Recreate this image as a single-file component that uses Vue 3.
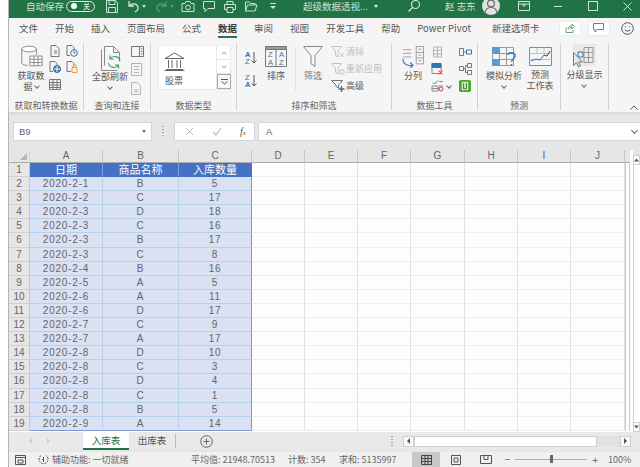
<script setup>
const menus = ['文件', '开始', '插入', '页面布局', '公式', '数据', '审阅', '视图', '开发工具', '帮助', 'Power Pivot', '新建选项卡'];

const colHeads = [
    { name: 'A', w: 73 }, { name: 'B', w: 76 }, { name: 'C', w: 73 }, { name: 'D', w: 53 },
    { name: 'E', w: 53 }, { name: 'F', w: 53 }, { name: 'G', w: 54 }, { name: 'H', w: 53 },
    { name: 'I', w: 53 }, { name: 'J', w: 54 },
];
const blanks = 7;

const rows = [
    ['2020-2-1', 'B', 5], ['2020-2-2', 'C', 17], ['2020-2-3', 'D', 18], ['2020-2-3', 'C', 16],
    ['2020-2-3', 'B', 17], ['2020-2-3', 'C', 8], ['2020-2-4', 'B', 16], ['2020-2-5', 'A', 5],
    ['2020-2-6', 'A', 11], ['2020-2-6', 'D', 17], ['2020-2-7', 'C', 9], ['2020-2-7', 'A', 17],
    ['2020-2-8', 'D', 10], ['2020-2-8', 'C', 3], ['2020-2-8', 'D', 4], ['2020-2-8', 'C', 1],
    ['2020-2-8', 'B', 5], ['2020-2-9', 'A', 14],
];

const gridCols = '21px ' + colHeads.map((c) => c.w + 'px').join(' ') + ' 5px';
</script>

<template>
    <div class="page">
        <div class="window">
            <!-- title bar -->
            <header class="titlebar">
                <span class="autosave">自动保存</span>
                <span class="toggle"><i></i><b>关</b></span>
                <svg class="qa-save" width="12" height="13" viewBox="0 0 12 13" fill="none" stroke="#cfe3d7"><path d="M.5.5h9l2 2v10H.5zM3 .5v4h6v-4M2.500 12.500v-5h7v5"/></svg>
                <svg class="qa-undo" width="13" height="13" viewBox="0 0 13 13" fill="none" stroke="#cfe3d7" stroke-width="1.3"><path d="M2 1v5h5M2 6c2-3 8-3 9 1 .5 2-1 4-3 5"/></svg>
                <span class="caret"></span>
                <svg class="qa-redo" width="13" height="13" viewBox="0 0 13 13" fill="none" stroke="#cfe3d7" stroke-width="1.3"><path d="M11 1v5H6M11 6C9 3 3 3 2 7c-.5 2 1 4 3 5"/></svg>
                <span class="caret dim"></span>
                <svg class="qa-camera" width="14" height="13" viewBox="0 0 14 13" fill="none" stroke="#cfe3d7"><path d="M1 3.500h3l1-2h4l1 2h3v8H1z"/><circle cx="7" cy="7.500" r="2.400"/></svg>
                <svg class="qa" width="14" height="13" viewBox="0 0 14 13" fill="none" stroke="#cfe3d7"><path d="M1.500 1.500h11v7H6l-3 3v-3H1.500z"/></svg>
                <svg class="qa" width="14" height="13" viewBox="0 0 14 13" fill="none" stroke="#cfe3d7"><path d="M4 4V1.500h6V4M1.500 4.500h11v5H10M4 9.500H1.500v-5M4 7.500h6v5H4z"/></svg>
                <svg class="qa" width="14" height="13" viewBox="0 0 14 13" fill="none" stroke="#cfe3d7"><path d="M1.500 11V2h4l1 1.500H11V5M1.500 11l2-6h9.500l-2 6z"/></svg>
                <span class="more"></span>
                <span class="doc-name">超级数据透视...</span>
                <span class="caret white"></span>
                <svg class="search" width="14" height="14" viewBox="0 0 14 14" fill="none" stroke="#cfe3d7" stroke-width="1.2"><circle cx="8.500" cy="5.500" r="4"/><path d="M5.500 8.500L1.500 12.500"/></svg>
                <span class="user">赵 志东</span>
                <span class="avatar">
                    <svg width="18" height="18" viewBox="0 0 18 18" fill="none" stroke="#6a6a6a" stroke-width="1.2"><circle cx="9" cy="6.500" r="3.400"/><path d="M3 16c.5-4 3-5.500 6-5.500s5.500 1.500 6 5.500"/></svg>
                </span>
                <svg class="display" width="12" height="10" viewBox="0 0 12 10" fill="none" stroke="#cfe3d7"><path d="M.5.500h11v9H.5zM.5 3h11M6 3v3M4.500 4.500L6 3l1.500 1.500"/></svg>
                <span class="win-min"></span>
                <span class="win-max"></span>
                <svg class="win-close" width="9" height="9" viewBox="0 0 9 9" stroke="#cfe3d7"><path d="M.5.500l8 8M8.500.500l-8 8"/></svg>
            </header>

            <!-- menu tabs -->
            <nav class="menubar">
                <span v-for="m in menus" :key="m" class="menu" :class="{ active: m === '数据', latin: m === 'Power Pivot' }">{{ m }}</span>
                <span class="menu-btn share">
                    <svg width="10" height="10" viewBox="0 0 10 10" fill="none" stroke="#6f9c84"><path d="M1 4.500v5h7V7M3 6c0-2.500 2-3 4-3V1l2.500 2.500L7 6V4.500C5 4.500 4 5 3 6z"/></svg>
                </span>
                <span class="menu-btn comment">
                    <svg width="11" height="10" viewBox="0 0 11 10" fill="none" stroke="#4e9470"><path d="M.5.500h10v6H4L2 9V6.500H.5z"/></svg>
                </span>
                <svg class="smile" width="13" height="13" viewBox="0 0 13 13" fill="none" stroke="#555"><circle cx="6.500" cy="6.500" r="5.800"/><path d="M3.800 7.800c1.200 1.700 4.200 1.700 5.400 0"/><path d="M4.600 4.300v1M8.400 4.300v1"/></svg>
            </nav>

            <!-- ribbon -->
            <section class="ribbon">
                <div class="group w-get">
                    <div class="gbody g1">
                        <div class="big">
                            <svg width="23" height="22" viewBox="0 0 28 27" fill="none" stroke="#777"><ellipse cx="11" cy="5" rx="9" ry="3.500" fill="#fff"/><path d="M2 5v17c0 2 3 3 7 3M20 5v7"/><path d="M12 13.500h15v12H12zM12 17.500h15M12 21.500h15M17 13.500v12M22 13.500v12" fill="#fff"/></svg>
                            <span class="lbl">获取数<br>据 <i class="chev"></i></span>
                        </div>
                        <div class="smalls">
                            <div class="sm-row">
                                <svg width="12" height="12" viewBox="0 0 12 12" fill="none" stroke="#777"><path d="M2 .500h5l3 3v8H2z"/><path d="M5 6h3M5 8h3"/></svg>
                                <svg width="12" height="12" viewBox="0 0 12 12" fill="none" stroke="#777"><path d="M1 .500h5l2 2v2M1 .500v10h3"/><circle cx="8" cy="8" r="3.300" stroke="#2e75b6"/><path d="M8 6v2h1.500" stroke="#2e75b6"/></svg>
                            </div>
                            <div class="sm-row">
                                <svg width="12" height="12" viewBox="0 0 12 12" fill="none" stroke="#777"><path d="M1 .500h5l2 2v2M1 .500v10h3"/><circle cx="8" cy="8" r="3.500" fill="#2e75b6" stroke="#2e75b6"/><path d="M5 8h6M8 5v6" stroke="#fff"/></svg>
                                <svg width="12" height="12" viewBox="0 0 12 12" fill="none" stroke="#777"><path d="M1 .500h5l2 2v2M1 .500v10h4"/><path d="M6 6.500h5v5H6z" stroke="#ed9a3c"/><path d="M7 6.500V5a1.500 1.500 0 013 0v1.500" stroke="#ed9a3c"/></svg>
                            </div>
                            <svg class="sm-last" width="12" height="11" viewBox="0 0 12 11" fill="none" stroke="#777"><path d="M.5.500h11v10H.5zM.5 3.500h11M.5 6h11M.5 8.500h11M4 .5v10M8 .5v10"/></svg>
                        </div>
                    </div>
                    <div class="glabel">获取和转换数据</div>
                </div>

                <div class="group w-query">
                    <div class="gbody g2">
                        <div class="big">
                            <svg width="24" height="25" viewBox="0 0 24 25" fill="none" stroke="#888"><path d="M3.500 3.500v21h16"/><path d="M6.500.5h9l6 6v9M15.500.5v6h6M6.500.5v19" fill="#fff"/><path d="M22 15a5.500 5.500 0 00-10-2M10.500 17a5.500 5.500 0 0010 2M12 9.500v3.500h3.500M20.500 22.500V19H17" stroke="#3fa06a" stroke-width="1.200"/></svg>
                            <span class="lbl flat">全部刷新<br><i class="chev"></i></span>
                        </div>
                        <div class="stack">
                            <svg width="13" height="11" viewBox="0 0 13 11" fill="none" stroke="#777"><path d="M.5.500h12v10H.5zM8.500.5v10"/><path d="M10 3h1.500M10 5.500h1.500M10 8h1.500" stroke="#2e75b6"/></svg>
                            <svg width="11" height="13" viewBox="0 0 11 13" fill="none" stroke="#b5b5b5"><path d="M.5.500h10v12H.5zM3 3.500h5M3 6.500h5M3 9.500h5"/></svg>
                            <svg width="11" height="13" viewBox="0 0 11 13" fill="none" stroke="#b5b5b5"><path d="M.5.500h6l3 3v9h-9zM3 8h4.500M3 10h4.500"/></svg>
                        </div>
                    </div>
                    <div class="glabel">查询和连接</div>
                </div>

                <div class="group w-type">
                    <div class="gbody g3">
                        <div class="gallery">
                            <div class="gallery-item">
                                <svg width="21" height="19" viewBox="0 0 21 19" fill="none" stroke="#666"><path d="M1 6.500L10.500 1 20 6.500zM2 6.500h17M2 17.500h17M.5 18.500h20M4.500 8v8M8 8v8M13 8v8M16.500 8v8"/></svg>
                                <span class="lbl">股票</span>
                            </div>
                            <div class="gallery-scroll">
                                <span><svg width="6" height="4" viewBox="0 0 6 4" fill="none" stroke="#999"><path d="M.5 3.500L3 1l2.500 2.500"/></svg></span>
                                <span><svg width="6" height="4" viewBox="0 0 6 4" fill="none" stroke="#999"><path d="M.5.500L3 3 5.500.5"/></svg></span>
                                <span class="open"><svg width="7" height="6" viewBox="0 0 7 6" fill="none" stroke="#555"><path d="M0 .5h7M.5 2.500L3.500 5l3-2.500"/></svg></span>
                            </div>
                        </div>
                    </div>
                    <div class="glabel">数据类型</div>
                </div>

                <div class="group w-sort">
                    <div class="gbody g4">
                        <div class="sort-pair">
                            <span class="az"><span class="letters"><b>A</b><br><em>Z</em></span><svg width="6" height="12" viewBox="0 0 6 12" fill="none" stroke="#555"><path d="M3 0v11M.5 8.500L3 11l2.500-2.500"/></svg></span>
                            <span class="az"><span class="letters"><em>Z</em><br><b>A</b></span><svg width="6" height="12" viewBox="0 0 6 12" fill="none" stroke="#555"><path d="M3 0v11M.5 8.500L3 11l2.500-2.500"/></svg></span>
                        </div>
                        <div class="big sort-big">
                            <svg width="22" height="21" viewBox="0 0 22 21" fill="none" stroke="#777"><path d="M.5.500h21v20H.5zM.5 3.500h21M11 3.500v17" /><path d="M.5.500h21v3H.5z" fill="#999"/><text x="3" y="11" class="svgt">Z</text><text x="14" y="11" class="svgt blue">A</text><text x="3" y="19" class="svgt blue">A</text><text x="14" y="19" class="svgt">Z</text></svg>
                            <span class="lbl">排序</span>
                        </div>
                        <span class="vsep"></span>
                        <div class="big filter-big">
                            <svg width="20" height="21" viewBox="0 0 20 21" fill="none" stroke="#888"><path d="M.5.500h19L12 9.500v11l-4-3v-8z"/></svg>
                            <span class="lbl dim">筛选</span>
                        </div>
                        <div class="filter-opts">
                            <span class="opt off"><svg width="14" height="12" viewBox="0 0 14 12" fill="none" stroke="#c4c4c4"><path d="M.5.500h10L7 5v6L4.500 9.500V5zM9 7l4 4M13 7l-4 4"/></svg>清除</span>
                            <span class="opt off"><svg width="14" height="12" viewBox="0 0 14 12" fill="none" stroke="#c4c4c4"><path d="M.5.500h10L7 5v6L4.500 9.500V5zM9 7h4v4H9z"/></svg>重新应用</span>
                            <span class="opt"><svg width="14" height="12" viewBox="0 0 14 12" fill="none" stroke="#777"><path d="M.5.500h11L7.500 5v3L5 6.500V5z"/><path d="M7.500 9h6M10.500 6v6" stroke="#2e75b6" stroke-width="1.500"/></svg>高级</span>
                        </div>
                    </div>
                    <div class="glabel">排序和筛选</div>
                </div>

                <div class="group w-tools">
                    <div class="gbody g5">
                        <div class="big">
                            <svg width="26" height="22" viewBox="0 0 26 24" fill="none" stroke="#999"><path d="M2 4h9M2 8h9M2 12h9" /><path d="M16.500 .5h8v19h-8zM16.500 7h8M16.500 13h8M19 3.500h3M19 10h3M19 16h3"/><path d="M2 14c0 6 5 8 11 7M10 18l3 3-3 3" stroke="#2e75b6" stroke-width="1.200"/></svg>
                            <span class="lbl">分列</span>
                        </div>
                        <div class="stack st5">
                            <svg width="13" height="12" viewBox="0 0 13 12" fill="none" stroke="#b5b5b5"><path d="M2.500 1h8v10h-8zM2.500 4.500h8M2.500 8h8M6.500 1v10"/></svg>
                            <svg width="13" height="12" viewBox="0 0 13 12" fill="none" stroke="#888"><path d="M1 .5h9v10H1z"/><path d="M1 .5h9v4H1z" fill="#2e75b6" stroke="#2e75b6"/><path d="M7.500 7.500l4 4M11.500 7.500l-4 4" stroke="#d13438"/></svg>
                            <span class="row-chev"><svg width="13" height="12" viewBox="0 0 13 12" fill="none" stroke="#888"><path d="M1 6h6v5H1zM1 8.500h6"/><path d="M2 2.500l1.500 1.500L7 .5" stroke="#3fa06a"/><path d="M8 6h4M8 1.500h4"/><circle cx="10" cy="9" r="2" stroke="#d13438"/></svg><i class="chev"></i></span>
                        </div>
                        <div class="stack st5b">
                            <svg width="13" height="12" viewBox="0 0 13 12" fill="none" stroke="#777"><path d="M.5 2.500h4v7h-4zM4.500 6h3"/><path d="M7.500 4h5v4h-5z" stroke="#2e75b6"/></svg>
                            <svg width="13" height="12" viewBox="0 0 13 12" fill="none" stroke="#777"><path d="M.5 3.500h4v4h-4zM8.500.5h4v4h-4zM8.500 7.500h4v4h-4zM4.500 5.500h2V2.500h2M6.500 5.500v4h2"/></svg>
                            <svg width="12" height="12" viewBox="0 0 13 13"><rect width="13" height="13" rx="2" fill="#4ea72e"/><rect x="3" y="2" width="7" height="9" fill="#d7ecd1"/><path d="M5 3.500v6h3v-6" fill="none" stroke="#2d6e2a"/></svg>
                        </div>
                    </div>
                    <div class="glabel">数据工具</div>
                </div>

                <div class="group w-fore">
                    <div class="gbody g6">
                        <div class="big whatif">
                            <svg width="25" height="20" viewBox="0 0 25 20" fill="none" stroke="#9a9a9a"><path d="M.5.500h21v18H.5zM.5 6.500h21M.5 12.500h21M7.500.5v18M14.500.5v18"/><path d="M.5.500h7v6h-7zM.5 12.500h7v6h-7z" fill="#5b9bd5" stroke="#5b9bd5"/><path d="M16 8c0-3 6-3 7 0s-3 3.500-3.500 7M19.500 17v2" stroke="#2e75b6" stroke-width="1.400"/></svg>
                            <span class="lbl">模拟分析<br><i class="chev"></i></span>
                        </div>
                        <div class="big forecast">
                            <svg width="23" height="19" viewBox="0 0 23 19" fill="none" stroke="#888"><path d="M.5.500h22v18H.5z"/><path d="M.5 6.500h22M.5 12.500h22M8 .5v6M15 .5v6" stroke="#c0c0c0"/><path d="M2 14l5-2 4 1 4-5 3 1 3-5" stroke="#2e75b6"/><path d="M15 8l3 1 3-5" stroke="#d13438"/></svg>
                            <span class="lbl">预测<br>工作表</span>
                        </div>
                    </div>
                    <div class="glabel">预测</div>
                </div>

                <div class="group w-outline">
                    <div class="gbody g7">
                        <div class="big">
                            <span class="hot">
                                <svg width="20" height="17" viewBox="0 0 20 17" fill="none" stroke="#999"><path d="M10 .5h9v15h-9zM14.500 .5v15M10 5.500h9M10 10.500h9"/><path d="M4 5h5v5H4z" stroke="#2e75b6"/></svg>
                            </span>
                            <span class="lbl">分级显示<br><i class="chev"></i></span>
                        </div>
                    </div>
                </div>
                <div class="collapse"><svg width="8" height="5" viewBox="0 0 8 5" fill="none" stroke="#555"><path d="M.5 4.500L4 1l3.500 3.500"/></svg></div>
                <svg class="cursor" width="10" height="16" viewBox="0 0 10 16"><path d="M.5.500v13l3-3 2 4.500 2-1-2-4h4z" fill="#e9e9e9" stroke="#777"/></svg>
            </section>

            <!-- formula bar -->
            <div class="formula">
                <div class="namebox"><span>B9</span><i class="down"></i></div>
                <span class="grip"></span>
                <div class="fxbox">
                    <svg width="9" height="9" viewBox="0 0 9 9" stroke="#bbb"><path d="M1 1l7 7M8 1L1 8"/></svg>
                    <svg width="10" height="9" viewBox="0 0 10 9" fill="none" stroke="#bbb" stroke-width="1.200"><path d="M1 5l3 3 5-7"/></svg>
                    <span class="fx">f<small>x</small></span>
                </div>
                <div class="input"><span>A</span><i class="chev end"></i></div>
            </div>

            <!-- sheet -->
            <div class="sheet-wrap">
                <div class="sheet" :style="{ gridTemplateColumns: gridCols }">
                    <div class="corner"><i></i></div>
                    <div v-for="c in colHeads" :key="c.name" class="chead">{{ c.name }}</div>
                    <div class="chead tail"></div>

                    <div class="rhead">1</div>
                    <div class="cell title">日期</div>
                    <div class="cell title">商品名称</div>
                    <div class="cell title last">入库数量</div>
                    <div v-for="n in blanks" :key="'t' + n" class="blank"></div>
                    <div class="tailcell"></div>

                    <template v-for="(r, i) in rows" :key="i">
                        <div class="rhead">{{ i + 2 }}</div>
                        <div class="cell" :class="{ bottom: i === rows.length - 1 }">{{ r[0] }}</div>
                        <div class="cell" :class="{ bottom: i === rows.length - 1 }">{{ r[1] }}</div>
                        <div class="cell last" :class="{ bottom: i === rows.length - 1 }">{{ r[2] }}</div>
                        <div v-for="n in blanks" :key="n" class="blank"></div>
                        <div class="tailcell"></div>
                    </template>
                </div>
                <div class="vscroll">
                    <span class="sbtn"><svg width="7" height="4" viewBox="0 0 7 4"><path d="M0 4l3.500-4L7 4z" fill="#555"/></svg></span>
                    <span class="vtrack"></span>
                    <span class="sbtn"><svg width="7" height="4" viewBox="0 0 7 4"><path d="M0 0l3.500 4L7 0z" fill="#555"/></svg></span>
                </div>
            </div>

            <!-- sheet tabs -->
            <div class="tabsbar">
                <span class="nav-arrows"><i></i><i class="r"></i></span>
                <span class="stab active">入库表</span>
                <span class="stab">出库表</span>
                <span class="stab-sep"></span>
                <svg class="add" width="13" height="13" viewBox="0 0 13 13" fill="none" stroke="#666"><circle cx="6.500" cy="6.500" r="5.800"/><path d="M3.500 6.500h6M6.500 3.500v6"/></svg>
                <span class="grip tabs-grip"></span>
                <div class="hscroll">
                    <span class="hbtn"><i class="tri-l"></i></span>
                    <span class="thumb"></span>
                    <span class="hrest"></span>
                    <span class="hbtn"><i class="tri-r"></i></span>
                </div>
            </div>

            <!-- status bar -->
            <footer class="status">
                <svg class="st-macro" width="11" height="10" viewBox="0 0 11 10" fill="none" stroke="#555"><path d="M.5.500h10v9H.5zM.5 2.500h10M3 5h5v3H3z"/></svg>
                <svg class="st-acc" width="11" height="11" viewBox="0 0 11 11" fill="none" stroke="#555"><path d="M3 1.500a4.500 4.500 0 105 0M4 5.500h3M5.500 3v5" stroke-dasharray="2 1"/></svg>
                <span class="st-text ready">辅助功能: 一切就绪</span>
                <span class="st-text avg">平均值: 21948.70513</span>
                <span class="st-text cnt">计数: 354</span>
                <span class="st-text sum">求和: 5135997</span>
                <span class="view active"><svg width="11" height="10" viewBox="0 0 11 10" fill="none" stroke="#444"><path d="M.5.500h10v9H.5zM.5 3.500h10M.5 6.500h10M4 .5v9M7 .5v9"/></svg></span>
                <span class="view"><svg width="10" height="10" viewBox="0 0 10 10" fill="none" stroke="#555"><path d="M.5.500h9v9h-9zM3 3h4v4H3z"/></svg></span>
                <span class="view"><svg width="12" height="9" viewBox="0 0 12 9" fill="none" stroke="#555"><path d="M.5 8.500V.5h11v8zM4 .5v4h4v-4"/></svg></span>
                <span class="zoom-minus"></span>
                <span class="slider"><i></i></span>
                <span class="zoom-plus">+</span>
                <span class="st-text pct">100%</span>
            </footer>
        </div>
    </div>
</template>

<style>
html, body { margin: 0; padding: 0; background: #fff; }
</style>

<style scoped>
.page { width: 640px; height: 467px; overflow: hidden; background: #fff; font-family: "Noto Sans CJK SC", "Noto Sans", sans-serif; color: #555; }
.window { margin-left: 8px; width: 632px; height: 467px; border-left: 1px solid #b5b5b5; box-sizing: border-box; background: #e6e6e6; display: flex; flex-direction: column; }

/* the top of the window is cropped, so the bar content sits high */
.titlebar { height: 18px; flex: none; box-sizing: border-box; background: #217346; display: flex; align-items: center; color: #cfe3d7; font-size: 9.5px; padding: 0 0 6px 17px; overflow: hidden; }
.autosave { width: 37px; white-space: nowrap; }
.toggle { margin-left: 3px; width: 29px; height: 11px; flex: none; border: 1px solid #e3efe8; border-radius: 7px; display: flex; align-items: center; justify-content: space-between; padding: 0 4px; box-sizing: border-box; }
.toggle i { width: 6px; height: 6px; border-radius: 50%; background: #fff; }
.toggle b { font-weight: 400; font-size: 7px; line-height: 9px; color: #fff; }
.qa-save { margin-left: 11px; flex: none; }
.qa-undo { margin-left: 9px; flex: none; }
.qa-redo { margin-left: 9px; flex: none; opacity: .35; }
.qa-camera { margin-left: 7px; flex: none; }
.qa { margin-left: 7px; flex: none; }
.caret { margin-left: 2px; width: 0; height: 0; border-left: 2.5px solid transparent; border-right: 2.5px solid transparent; border-top: 3px solid #cfe3d7; }
.caret.dim { opacity: .35; }
.caret.white { margin-left: 5px; border-top-color: #e9f2ed; }
.more { margin-left: 12px; width: 6px; height: 5px; border-top: 1px solid #cfe3d7; }
.more::after { content: ""; display: block; width: 0; margin-top: 2px; border-left: 3px solid transparent; border-right: 3px solid transparent; border-top: 3px solid #cfe3d7; }
.doc-name { margin-left: 27px; width: 66px; white-space: nowrap; }
.search { margin-left: 29px; flex: none; }
.user { margin-left: 24px; width: 34px; white-space: nowrap; }
.avatar { margin-left: 3px; width: 18px; height: 18px; flex: none; border-radius: 50%; background: #e2e2e2; display: flex; overflow: hidden; }
.display { margin-left: 18px; flex: none; }
.win-min { margin-left: 24px; width: 8px; height: 1px; background: #cfe3d7; }
.win-max { margin-left: 26px; width: 8px; height: 8px; border: 1px solid #cfe3d7; }
.win-close { margin-left: 25px; flex: none; }

.menubar { height: 20px; flex: none; background: #f5f5f5; display: flex; align-items: center; padding-left: 10px; gap: 17px; font-size: 9.5px; color: #555; }
.menu { position: relative; white-space: nowrap; line-height: 20px; }
.menu.latin { margin-right: 4px; letter-spacing: .1px; }
.menu.active { font-weight: 700; color: #3c3c3c; }
.menu.active::after { content: ""; position: absolute; left: 0; right: 0; bottom: 0; height: 2px; background: #217346; }
.menu-btn { width: 22px; height: 15px; flex: none; background: #fff; border: 1px solid #ececec; box-sizing: border-box; display: flex; align-items: center; justify-content: center; }
.share { margin-left: 2px; margin-right: -17px; }
.comment { margin-left: 7px; margin-right: -17px; }
.smile { margin-left: 11px; flex: none; }

.ribbon { height: 74px; flex: none; background: #f5f5f5; border-bottom: 1px solid #dcdcdc; display: flex; position: relative; margin-bottom: 9px; box-shadow: 0 1px 2px #d5d5d5; }
.group { flex: none; border-right: 1px solid #d2d2d2; margin: 5px 0 2px; box-sizing: border-box; display: flex; flex-direction: column; }
.w-get { width: 75px; }
.w-query { width: 67px; }
.w-type { width: 86px; }
.w-sort { width: 155px; }
.w-tools { width: 86px; }
.w-fore { width: 83px; }
.w-outline { width: 48px; }
.gbody { flex: 1; display: flex; min-height: 0; }
.glabel { height: 13px; line-height: 18px; text-align: center; font-size: 9px; color: #666; white-space: nowrap; }
.big { display: flex; flex-direction: column; align-items: center; }
.lbl { font-size: 9px; line-height: 11px; color: #555; text-align: center; white-space: nowrap; margin-top: 3px; }
.lbl.dim { color: #777; }
.lbl.flat { margin-top: 0; }
.chev { display: inline-block; width: 3px; height: 3px; border-right: 1px solid #666; border-bottom: 1px solid #666; transform: rotate(45deg); vertical-align: 2px; }

.g1 { padding: 2px 0 0 8px; gap: 4px; }
.g1 .big { width: 28px; }
.smalls { display: flex; flex-direction: column; }
.sm-row { display: flex; gap: 5px; margin-bottom: 4px; height: 12px; }
.sm-last { margin-top: 2px; }
.g2 { padding: 3px 0 0 7px; gap: 2px; }
.g2 .big { width: 38px; }
.stack { display: flex; flex-direction: column; gap: 6px; }
.g3 { padding: 2px 5px 0 7px; }
.gallery { flex: 1; height: 45px; background: #fff; border: 1px solid #ececec; box-sizing: border-box; display: flex; }
.gallery-item { flex: 1; display: flex; flex-direction: column; align-items: flex-start; padding: 6px 0 0 5px; }
.gallery-item .lbl { margin: 4px 0 0 1px; }
.gallery-scroll { width: 13px; flex: none; display: flex; flex-direction: column; border-left: 1px solid #e6e6e6; }
.gallery-scroll span { flex: 1; display: flex; align-items: center; justify-content: center; border-bottom: 1px solid #e6e6e6; }
.gallery-scroll .open { border: 1px solid #aaa; margin-right: -1px; background: #f7f7f7; }

.g4 { padding-left: 8px; }
.sort-pair { width: 15px; display: flex; flex-direction: column; gap: 9px; padding-top: 8px; }
.az { display: flex; align-items: center; gap: 1px; }
.letters { line-height: 7px; font-size: 7.5px; font-family: "Liberation Sans", sans-serif; }
.letters b { color: #2e75b6; font-weight: 700; }
.letters em { color: #666; font-style: normal; }
.svgt { font-family: "Liberation Sans", sans-serif; font-size: 7.5px; fill: #666; stroke: none; }
.svgt.blue { fill: #2e75b6; }
.sort-big { margin-left: 5px; padding-top: 3px; width: 22px; }
.vsep { width: 1px; height: 42px; margin: 5px 0 0 8px; background: #e0e0e0; }
.filter-big { margin-left: 7px; padding-top: 3px; width: 20px; }
.filter-opts { margin-left: 8px; padding-top: 1px; display: flex; flex-direction: column; gap: 2px; }
.opt { display: flex; align-items: center; gap: 1px; font-size: 9px; line-height: 15px; height: 15px; white-space: nowrap; color: #555; }
.opt.off { color: #bdbdbd; }

.g5 { padding: 3px 0 0 8px; }
.g5 .big { width: 26px; }
.g5 .lbl { margin-top: 2px; }
.st5 { margin-left: 5px; gap: 5px; }
.st5b { margin-left: 6px; gap: 5px; }
.row-chev { display: flex; align-items: center; gap: 3px; width: 22px; }

.g6 { padding: 4px 0 0 8px; gap: 3px; }
.whatif { width: 36px; }
.forecast { width: 30px; }
.g7 { padding-top: 1px; justify-content: center; }
.hot { width: 23px; height: 22px; background: #e9e9e9; display: flex; align-items: center; justify-content: center; }
.collapse { margin: auto 0 2px auto; padding-right: 2px; line-height: 5px; }
.cursor { position: absolute; left: 564px; top: 14px; }

.formula { height: 19px; flex: none; display: flex; align-items: stretch; padding-left: 4px; margin-bottom: 9px; }
.namebox { width: 139px; box-sizing: border-box; background: #fff; border: 1px solid #d5d5d5; display: flex; align-items: center; justify-content: space-between; padding: 0 5px; font-size: 9.5px; font-family: "Liberation Sans", sans-serif; color: #666; }
.down { width: 0; height: 0; border-left: 2.5px solid transparent; border-right: 2.5px solid transparent; border-top: 3px solid #666; }
.grip { width: 2px; margin: 4px 10px; background: repeating-linear-gradient(#aaa 0 1px, transparent 1px 3px); }
.fxbox { width: 81px; box-sizing: border-box; background: #fff; border: 1px solid #d5d5d5; display: flex; align-items: center; padding-left: 10px; gap: 18px; }
.fx { font-family: "Liberation Serif", serif; font-style: italic; font-size: 10px; color: #555; }
.fx small { font-size: 7px; }
.input { flex: 1; margin-left: 3px; background: #fff; border: 1px solid #d5d5d5; border-right: 0; display: flex; align-items: center; justify-content: space-between; padding: 0 3px 0 7px; font-size: 9.5px; font-family: "Liberation Sans", sans-serif; color: #666; }
.chev.end { vertical-align: 0; width: 4px; height: 4px; margin-top: -3px; }

.sheet-wrap { height: 282px; flex: none; display: flex; overflow: hidden; background: #fff; }
.sheet { flex: none; display: grid; grid-auto-rows: 14.1px; grid-template-rows: 13px; font-family: "Liberation Sans", sans-serif; }
.corner { background: #e6e6e6; border-right: 1px solid #d0d0d0; border-bottom: 1px solid #aaa; box-sizing: border-box; display: flex; align-items: flex-end; justify-content: flex-end; padding: 0 2px 2px 0; }
.corner i { width: 0; height: 0; border-left: 7px solid transparent; border-bottom: 7px solid #b5b5b5; }
.chead { background: #e6e6e6; border-right: 1px solid #c6c6c6; border-bottom: 1px solid #aaa; box-sizing: border-box; font-size: 10px; line-height: 12px; text-align: center; color: #666; }
.chead.tail { border-right: 0; }
.rhead { background: #e6e6e6; border-right: 1px solid #c6c6c6; border-bottom: 1px solid #d0d0d0; box-sizing: border-box; font-size: 10px; line-height: 14px; text-align: center; color: #666; }
.cell { background: #d9e1f2; border-bottom: 1px solid #b5d2ea; border-right: 1px solid #b5d2ea; box-sizing: border-box; font-size: 10px; letter-spacing: .8px; line-height: 13px; text-align: center; color: #666; white-space: nowrap; }
.cell.last { border-right: 1px solid #7f95d4; }
.cell.bottom { border-bottom: 1px solid #7f95d4; }
.cell.title { background: #4472c4; color: #fff; font-family: "Noto Sans CJK SC", sans-serif; font-size: 11px; letter-spacing: 0; line-height: 13px; border-bottom-color: #4472c4; border-right-color: #7f9fdc; }
.cell.title.last { border-right-color: #4472c4; }
.blank { border-right: 1px solid #e2e2e2; border-bottom: 1px solid #e7f1eb; box-sizing: border-box; background: #fdfdfd; }
.tailcell { background: #fdfdfd; border-left: 1px solid #c8c8c8; border-right: 1px solid #c8c8c8; box-sizing: border-box; }
.vscroll { flex: 1; margin-left: 3px; padding-top: 5px; display: flex; flex-direction: column; background: #e6e6e6; min-width: 0; }
.sbtn { height: 10px; flex: none; background: #fff; border: 1px solid #cfcfcf; box-sizing: border-box; display: flex; align-items: center; justify-content: center; }
.vtrack { flex: 1; background: #fff; border-left: 1px solid #cfcfcf; }

.tabsbar { height: 18px; flex: none; display: flex; align-items: stretch; background: #e9e9e9; box-sizing: border-box; font-size: 9.5px; }
.nav-arrows { width: 74px; flex: none; display: flex; align-items: center; padding-left: 20px; gap: 15px; box-sizing: border-box; }
.nav-arrows i { width: 0; height: 0; border-top: 3px solid transparent; border-bottom: 3px solid transparent; border-right: 3px solid #ccc; }
.nav-arrows i.r { border-right: 0; border-left: 3px solid #ccc; }
.stab { width: 46px; flex: none; text-align: center; line-height: 17px; color: #555; box-sizing: border-box; }
.stab.active { background: #fff; color: #217346; border-bottom: 2px solid #217346; }
.stab-sep { width: 1px; margin: 2px 0; background: #bdbdbd; }
.add { margin: 3px 0 0 24px; flex: none; }
.tabs-grip { margin: 4px 10px 4px 178px; }
.hscroll { display: flex; width: 228px; height: 11px; align-self: center; flex: none; }
.hbtn { width: 11px; flex: none; background: #fafafa; border: 1px solid #cfcfcf; box-sizing: border-box; display: flex; align-items: center; justify-content: center; }
.tri-l { width: 0; height: 0; border-top: 3px solid transparent; border-bottom: 3px solid transparent; border-right: 3px solid #555; }
.tri-r { width: 0; height: 0; border-top: 3px solid transparent; border-bottom: 3px solid transparent; border-left: 3px solid #555; }
.thumb { width: 183px; background: #fff; border: 1px solid #cfcfcf; box-sizing: border-box; }
.hrest { flex: 1; background: #e2e2e2; }

.status { height: 15px; margin-top: 2px; flex: none; background: #f0f0f0; display: flex; align-items: center; font-size: 9px; color: #666; }
.st-macro { margin-left: 6px; flex: none; }
.st-acc { margin-left: 12px; flex: none; }
.st-text { white-space: nowrap; line-height: 15px; }
.ready { margin-left: 3px; width: 139px; }
.avg { width: 85px; }
.cnt { margin-left: 12px; width: 39px; }
.sum { margin-left: 12px; width: 62px; }
.view { width: 28px; height: 15px; flex: none; display: flex; align-items: center; justify-content: center; margin-left: 2px; }
.view.active { background: #c8c8c8; margin-left: 11px; }
.zoom-minus { margin-left: 5px; width: 5px; height: 1px; background: #888; }
.slider { margin-left: 5px; width: 72px; height: 1px; background: #aaa; position: relative; }
.slider i { position: absolute; left: 35px; top: -4px; width: 3px; height: 8px; background: #666; }
.zoom-plus { margin-left: 5px; font-size: 11px; color: #777; width: 9px; font-family: "Liberation Sans", sans-serif; }
.pct { margin-left: 7px; }
</style>
